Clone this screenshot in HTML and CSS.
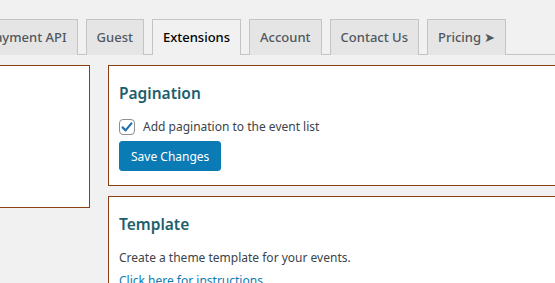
FILE: index.html
```html
<!DOCTYPE html>
<html lang="en">
<head>
  <meta charset="UTF-8">
  <meta name="viewport" content="width=device-width, initial-scale=1.0">
  <title>Extensions</title>
  <link rel="stylesheet" href="styles.css">
</head>
<body>
  <div class="wrap">
    <nav class="nav-tabs">
      <a class="nav-tab">Payment API</a>
      <a class="nav-tab">Guest</a>
      <a class="nav-tab active">Extensions</a>
      <a class="nav-tab">Account</a>
      <a class="nav-tab">Contact Us</a>
      <a class="nav-tab">Pricing &#10148;</a>
    </nav>

    <div class="columns">
      <div class="side">
        <div class="box side-box"></div>
      </div>

      <div class="main">
        <div class="box">
          <h2>Pagination</h2>
          <label class="check-row">
            <span class="checkbox">
              <svg viewBox="0 0 16 16" width="16" height="16"><path d="M3.6 8.4 L6.6 11.4 L12.4 4.4" fill="none" stroke="#2271b1" stroke-width="2.2" stroke-linecap="round" stroke-linejoin="round"/></svg>
            </span>
            Add pagination to the event list
          </label>
          <button class="button-primary">Save Changes</button>
        </div>

        <div class="box">
          <h2>Template</h2>
          <p>Create a theme template for your events.</p>
          <a class="link" href="#">Click here for instructions.</a>
        </div>
      </div>
    </div>
  </div>
</body>
</html>
```

FILE: styles.css
```css
html, body {
  margin: 0;
  padding: 0;
  overflow: hidden;
}
body {
  background: #f1f1f1;
  font-family: "Noto Sans", "Open Sans", sans-serif;
  font-size: 12px;
  color: #3c434a;
  width: 555px;
  height: 283px;
}
.wrap {
  margin-left: -110px;
  padding-top: 19px;
}
.nav-tabs {
  display: flex;
  gap: 8px;
  border-bottom: 1px solid #c3c4c7;
  padding-left: 86px;
  height: 35px;
}
.nav-tab {
  display: block;
  box-sizing: border-box;
  height: 36px;
  padding: 5px 10px;
  font-size: 13px;
  line-height: 24px;
  font-weight: 500;
  color: #50575e;
  background: #e5e5e5;
  border: 1px solid #c3c4c7;
  border-bottom: none;
  white-space: nowrap;
}
.nav-tab.active {
  background: #f1f1f1;
  color: #000;
  position: relative;
  z-index: 1;
}
.columns {
  display: grid;
  grid-template-columns: 200px 520px;
  gap: 18px;
  margin-top: 10px;
}
.box {
  background: #fff;
  border: 1px solid #8a3e12;
  padding: 0 10px;
  margin-bottom: 10px;
}
.side-box {
  height: 141px;
}
h2 {
  font-size: 15.5px;
  font-weight: 600;
  color: #1d5f6d;
  margin: 15px 0 12px;
  line-height: 24px;
}
.check-row {
  display: flex;
  align-items: center;
  gap: 8px;
  line-height: 20px;
}
.checkbox {
  box-sizing: border-box;
  width: 16px;
  height: 16px;
  border: 1px solid #8c8f94;
  border-radius: 4px;
  background: #fff;
  display: flex;
}
.checkbox svg {
  margin: -1px;
}
.button-primary {
  margin: 4px 0 14px;
  height: 30px;
  padding: 0 11px;
  background: #0b7bb5;
  border: 1px solid #0b7bb5;
  border-radius: 3px;
  color: #fff;
  font-family: inherit;
  font-size: 12px;
}
p {
  margin: 11px 0 3px;
  line-height: 20px;
}
.link {
  color: #0b7bb5;
  text-decoration: underline;
  line-height: 20px;
}
```
